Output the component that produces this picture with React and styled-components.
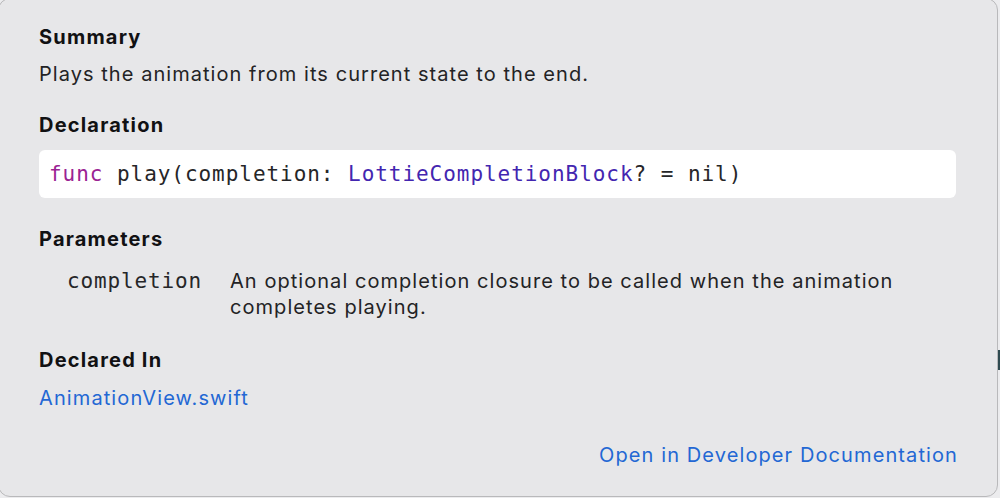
import React from 'react';
import styled, { createGlobalStyle } from 'styled-components';

const GlobalStyle = createGlobalStyle`
  html, body {
    margin: 0;
    padding: 0;
    background: #ececee;
  }
  body {
    font-family: Inter, "Noto Sans", sans-serif;
  }
`;

const Page = styled.div`
  width: 1000px;
  height: 498px;
  overflow: hidden;
  position: relative;
`;

const Panel = styled.div`
  box-sizing: border-box;
  margin: -2px 0 0 -2px;
  width: 1000px;
  height: 499px;
  background: #e7e7e9;
  border: 1px solid #b9b9bb;
  border-radius: 12px;
  padding: 25px 41px 0 40px;
  display: flex;
  flex-direction: column;
`;

/* sliver of the window behind the popover, peeking at the right edge */
const BehindSliver = styled.div`
  position: absolute;
  right: 0;
  top: 350px;
  width: 2px;
  height: 20px;
  background: #2f4a50;
`;

const Section = styled.section`
  display: flex;
  flex-direction: column;
  margin-bottom: ${(p) => p.$after || 25}px;
`;

const Heading = styled.h3`
  margin: 0 0 ${(p) => p.$gap || 11}px;
  font-size: 20px;
  line-height: 26px;
  font-weight: 700;
  letter-spacing: 1.2px;
  color: #111113;
`;

const Text = styled.p`
  margin: 0;
  font-size: 20px;
  line-height: 26px;
  letter-spacing: 1.05px;
  color: #232325;
`;

const CodeBlock = styled.div`
  height: 48px;
  background: #ffffff;
  border-radius: 6px;
  display: flex;
  align-items: center;
  padding: 0 10px;
  font-family: "DejaVu Sans Mono", "Liberation Mono", monospace;
  font-size: 21px;
  letter-spacing: 0.95px;
  color: #262628;
  white-space: pre;
`;

const Keyword = styled.span`
  color: #9b2393;
`;

const TypeName = styled.span`
  color: #4326b0;
`;

const ParamRow = styled.div`
  display: grid;
  grid-template-columns: 163px 1fr;
  padding-left: 28px;
`;

const ParamName = styled.span`
  font-family: "DejaVu Sans Mono", "Liberation Mono", monospace;
  font-size: 21px;
  letter-spacing: 0.85px;
  line-height: 26px;
  color: #262628;
`;

const Link = styled.a`
  font-size: 20px;
  line-height: 26px;
  letter-spacing: 1.1px;
  color: #2367d4;
  text-decoration: none;
  align-self: ${(p) => (p.$right ? 'flex-end' : 'flex-start')};
  margin-right: ${(p) => (p.$right ? -2 : 0)}px;
`;

export default function App() {
  return (
    <Page>
      <GlobalStyle />
      <Panel>
        <Section>
          <Heading>Summary</Heading>
          <Text>Plays the animation from its current state to the end.</Text>
        </Section>
        <Section $after={28}>
          <Heading $gap={12}>Declaration</Heading>
          <CodeBlock>
            <Keyword>func</Keyword>
            {' play(completion: '}
            <TypeName>LottieCompletionBlock</TypeName>
            {'? = nil)'}
          </CodeBlock>
        </Section>
        <Section $after={27}>
          <Heading $gap={16}>Parameters</Heading>
          <ParamRow>
            <ParamName>completion</ParamName>
            <Text>
              An optional completion closure to be called when the animation
              completes playing.
            </Text>
          </ParamRow>
        </Section>
        <Section $after={31}>
          <Heading $gap={12}>Declared In</Heading>
          <Link href="#">AnimationView.swift</Link>
        </Section>
        <Link href="#" $right>
          Open in Developer Documentation
        </Link>
      </Panel>
      <BehindSliver />
    </Page>
  );
}
